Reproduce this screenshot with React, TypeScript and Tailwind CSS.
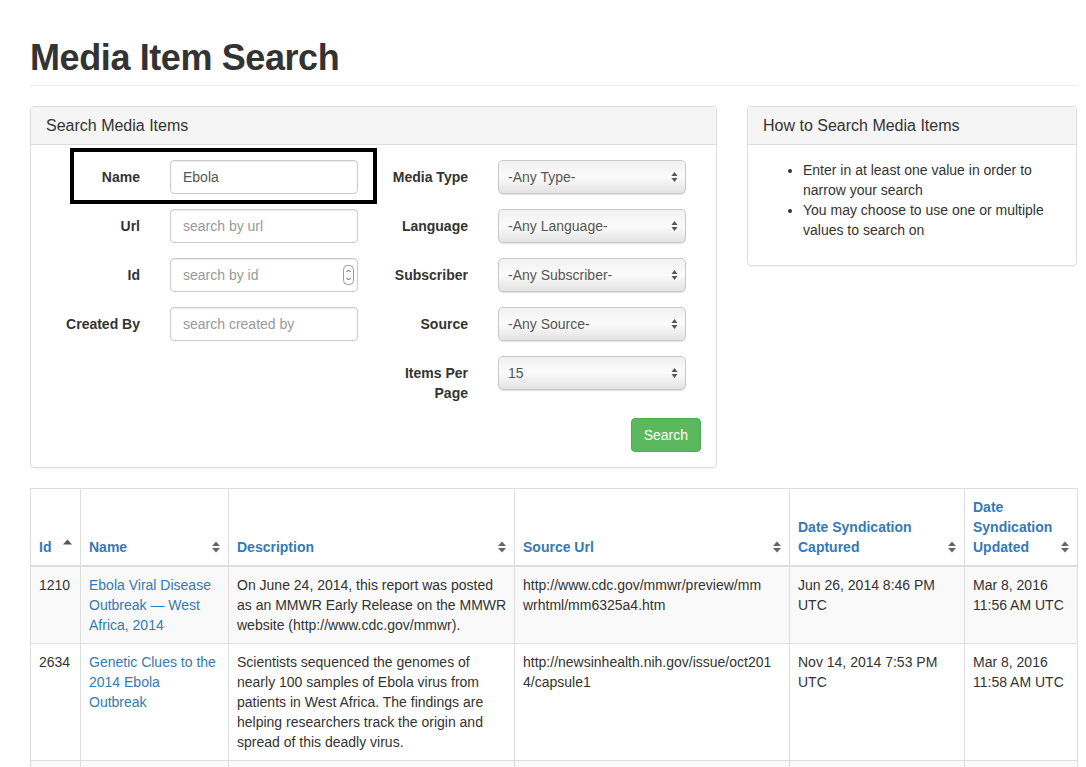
import React from 'react';

const SortIcon = () => (
  <svg width="8" height="12" viewBox="0 0 8 12" className="shrink-0">
    <path d="M0 5 L4 0.5 L8 5 Z" fill="#666" />
    <path d="M0 7 L4 11.5 L8 7 Z" fill="#666" />
  </svg>
);

const SortUp = () => (
  <svg width="9" height="6" viewBox="0 0 9 6" className="shrink-0 mb-[12px]">
    <path d="M0 5.5 L4.5 0.5 L9 5.5 Z" fill="#555" />
  </svg>
);

const SelectArrows = () => (
  <svg width="7" height="12" viewBox="0 0 7 12">
    <path d="M0.5 5 L3.5 1 L6.5 5 Z" fill="#555" />
    <path d="M0.5 7 L3.5 11 L6.5 7 Z" fill="#555" />
  </svg>
);

const Spinner = () => (
  <svg width="11" height="20" viewBox="0 0 11 20">
    <rect x="0.5" y="0.5" width="10" height="19" rx="4" fill="#fff" stroke="#999" />
    <path d="M3.5 7 L5.5 5 L7.5 7" fill="none" stroke="#555" strokeWidth="1" />
    <path d="M3.5 13 L5.5 15 L7.5 13" fill="none" stroke="#555" strokeWidth="1" />
  </svg>
);

const TextField = ({ value, placeholder, spin }: { value?: string; placeholder: string; spin?: boolean }) => (
  <div className="w-[188px] h-[34px] border border-[#ccc] rounded-[4px] shadow-[inset_0_1px_1px_rgba(0,0,0,0.075)] flex items-center pl-3 pr-[3px] bg-white">
    <span className={value ? 'text-[#555] flex-1' : 'text-[#999] flex-1'}>{value || placeholder}</span>
    {spin && <Spinner />}
  </div>
);

const SelectBox = ({ value }: { value: string }) => (
  <div className="w-[188px] h-[34px] rounded-[5px] border border-[#c9c9c9] shadow-[0_1px_1px_rgba(0,0,0,0.12)] bg-gradient-to-b from-[#f1f1f1] via-[#fbfbfb] to-[#e3e3e3] flex items-center justify-between pl-[9px] pr-[7px]">
    <span className="text-[#555]">{value}</span>
    <SelectArrows />
  </div>
);

const FormRow = ({ label, children }: { label: string; children: React.ReactNode }) => (
  <div className="flex gap-[30px] mb-[15px]">
    <label className="w-[94px] text-right font-bold pt-[7px] leading-5">{label}</label>
    {children}
  </div>
);

// lines are broken as in the original page
const rows = [
  {
    id: '1210',
    name: 'Ebola Viral Disease Outbreak — West Africa, 2014',
    desc: ['On June 24, 2014, this report was posted', 'as an MMWR Early Release on the MMWR', 'website (http://www.cdc.gov/mmwr).'],
    url: ['http://www.cdc.gov/mmwr/preview/mm', 'wrhtml/mm6325a4.htm'],
    captured: 'Jun 26, 2014 8:46 PM UTC',
    updated: 'Mar 8, 2016 11:56 AM UTC',
  },
  {
    id: '2634',
    name: 'Genetic Clues to the 2014 Ebola Outbreak',
    desc: [
      'Scientists sequenced the genomes of',
      'nearly 100 samples of Ebola virus from',
      'patients in West Africa. The findings are',
      'helping researchers track the origin and',
      'spread of this deadly virus.',
    ],
    url: ['http://newsinhealth.nih.gov/issue/oct201', '4/capsule1'],
    captured: 'Nov 14, 2014 7:53 PM UTC',
    updated: 'Mar 8, 2016 11:58 AM UTC',
  },
  {
    id: '2701',
    name: 'Ebola Response Update',
    desc: [],
    url: [],
    captured: '',
    updated: '',
  },
];

const headers = [
  { label: 'Id', up: true },
  { label: 'Name' },
  { label: 'Description' },
  { label: 'Source Url' },
  { label: 'Date Syndication Captured' },
  { label: 'Date Syndication Updated' },
];

const Lines = ({ lines }: { lines: string[] }) => (
  <>
    {lines.map((l, i) => (
      <span key={i} className="block whitespace-nowrap">
        {l}
      </span>
    ))}
  </>
);

export default function App() {
  return (
    <div className="min-h-screen bg-white text-[#333] text-[14px] leading-5 font-['Liberation_Sans',Arial,sans-serif]">
      <div className="w-[1047px] ml-[30px]">
        {/* page header */}
        <div className="pt-[38px] pb-[7px] border-b border-[#eee]">
          <h1 className="text-[36px] leading-[40px] font-bold tracking-[-0.4px]">Media Item Search</h1>
        </div>

        <div className="flex gap-[30px] mt-5">
          {/* search panel */}
          <div className="w-[687px] border border-[#ddd] rounded-[4px] shadow-[0_1px_1px_rgba(0,0,0,0.05)]">
            <div className="bg-[#f5f5f5] border-b border-[#ddd] rounded-t-[4px] px-[15px] pt-[10px] pb-[9px] text-[16px] leading-[18px]">
              Search Media Items
            </div>
            <div className="p-[15px]">
              <div className="flex gap-4">
                <div className="w-[312px]">
                  <div className="relative">
                    <FormRow label="Name">
                      <TextField value="Ebola" placeholder="search by name" />
                    </FormRow>
                    <div className="absolute left-[24px] top-[-12px] w-[307px] h-[56px] border-4 border-black" />
                  </div>
                  <FormRow label="Url">
                    <TextField placeholder="search by url" />
                  </FormRow>
                  <FormRow label="Id">
                    <TextField placeholder="search by id" spin />
                  </FormRow>
                  <FormRow label="Created By">
                    <TextField placeholder="search created by" />
                  </FormRow>
                </div>
                <div className="w-[312px]">
                  <FormRow label="Media Type">
                    <SelectBox value="-Any Type-" />
                  </FormRow>
                  <FormRow label="Language">
                    <SelectBox value="-Any Language-" />
                  </FormRow>
                  <FormRow label="Subscriber">
                    <SelectBox value="-Any Subscriber-" />
                  </FormRow>
                  <FormRow label="Source">
                    <SelectBox value="-Any Source-" />
                  </FormRow>
                  <FormRow label="Items Per Page">
                    <SelectBox value="15" />
                  </FormRow>
                </div>
              </div>
              <div className="flex justify-end">
                <button className="h-[34px] px-3 bg-[#5cb85c] border border-[#4cae4c] rounded-[4px] text-white">
                  Search
                </button>
              </div>
            </div>
          </div>

          {/* help panel */}
          <div className="w-[330px] self-start border border-[#ddd] rounded-[4px] shadow-[0_1px_1px_rgba(0,0,0,0.05)]">
            <div className="bg-[#f5f5f5] border-b border-[#ddd] rounded-t-[4px] px-[15px] pt-[10px] pb-[9px] text-[16px] leading-[18px]">
              How to Search Media Items
            </div>
            <div className="p-[15px]">
              <ul className="list-disc pl-10 mb-[10px]">
                <li>Enter in at least one value in order to narrow your search</li>
                <li>You may choose to use one or multiple values to search on</li>
              </ul>
            </div>
          </div>
        </div>

        {/* results table */}
        <table className="mt-5 w-[1047px] border-collapse border border-[#ddd] table-fixed">
          <colgroup>
            <col className="w-[50px]" />
            <col className="w-[148px]" />
            <col className="w-[286px]" />
            <col className="w-[275px]" />
            <col className="w-[175px]" />
            <col className="w-[113px]" />
          </colgroup>
          <thead>
            <tr>
              {headers.map((h) => (
                <th key={h.label} className="border border-[#ddd] border-b-2 p-2 align-bottom text-left font-bold">
                  <div className="flex items-end justify-between gap-1">
                    <span className="text-[#337ab7]">{h.label}</span>
                    {h.up ? (
                      <SortUp />
                    ) : (
                      <span className="h-5 flex items-center">
                        <SortIcon />
                      </span>
                    )}
                  </div>
                </th>
              ))}
            </tr>
          </thead>
          <tbody>
            {rows.map((r, i) => (
              <tr key={r.id} className={i % 2 === 0 ? 'bg-[#f9f9f9]' : 'bg-white'}>
                <td className="border border-[#ddd] p-2 align-top">{r.id}</td>
                <td className="border border-[#ddd] p-2 align-top">
                  <a className="text-[#337ab7]">{r.name}</a>
                </td>
                <td className="border border-[#ddd] p-2 align-top">
                  <Lines lines={r.desc} />
                </td>
                <td className="border border-[#ddd] p-2 align-top">
                  <Lines lines={r.url} />
                </td>
                <td className="border border-[#ddd] p-2 align-top">{r.captured}</td>
                <td className="border border-[#ddd] p-2 align-top">{r.updated}</td>
              </tr>
            ))}
          </tbody>
        </table>
      </div>
    </div>
  );
}
